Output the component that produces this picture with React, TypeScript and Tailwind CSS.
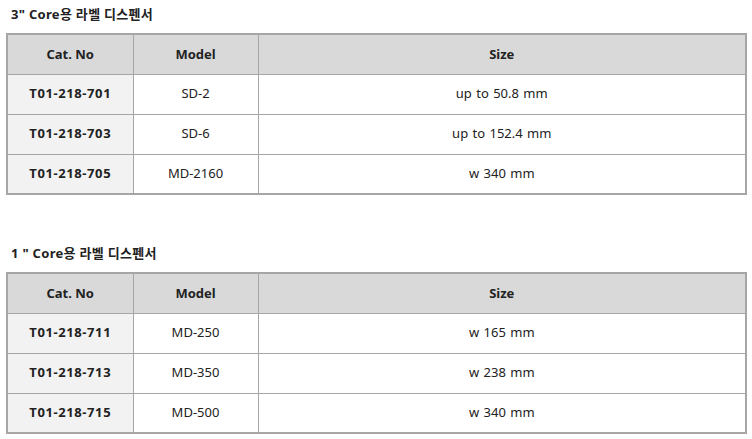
const tables = [
  {
    title: '3" Core용 라벨 디스펜서',
    rows: [
      ['T01-218-701', 'SD-2', 'up to 50.8 mm'],
      ['T01-218-703', 'SD-6', 'up to 152.4 mm'],
      ['T01-218-705', 'MD-2160', 'w 340 mm'],
    ],
  },
  {
    title: '1 " Core용 라벨 디스펜서',
    rows: [
      ['T01-218-711', 'MD-250', 'w 165 mm'],
      ['T01-218-713', 'MD-350', 'w 238 mm'],
      ['T01-218-715', 'MD-500', 'w 340 mm'],
    ],
  },
];

function SpecTable({ title, rows }: { title: string; rows: string[][] }) {
  return (
    <div>
      <h3 className="pl-[5px] text-[13px] font-bold leading-[18px] tracking-[0.3px] text-[#222]">{title}</h3>
      <table className="mt-[10px] w-[741px] border-collapse border-2 border-[#a6a6a6] text-[13px] text-[#222]">
        <thead>
          <tr className="h-[40px] bg-[#d9d9d9]">
            <th className="w-[126px] border border-[#a6a6a6] font-bold">Cat. No</th>
            <th className="w-[125px] border border-[#a6a6a6] font-bold">Model</th>
            <th className="border border-[#a6a6a6] font-bold">Size</th>
          </tr>
        </thead>
        <tbody>
          {rows.map((r) => (
            <tr key={r[0]} className="h-[40px]">
              <td className="border border-[#a6a6a6] bg-[#f2f2f2] text-center font-bold tracking-[0.6px]">{r[0]}</td>
              <td className="border border-[#a6a6a6] text-center">{r[1]}</td>
              <td className="border border-[#a6a6a6] text-center [word-spacing:1px]">{r[2]}</td>
            </tr>
          ))}
        </tbody>
      </table>
    </div>
  );
}

export default function App() {
  return (
    <div
      className="flex h-[439px] w-[752px] flex-col gap-[49px] bg-white pl-[6px] pt-[5px]"
      style={{ fontFamily: '"Noto Sans", "Noto Sans CJK KR", sans-serif' }}
    >
      {tables.map((t) => (
        <SpecTable key={t.title} title={t.title} rows={t.rows} />
      ))}
    </div>
  );
}
